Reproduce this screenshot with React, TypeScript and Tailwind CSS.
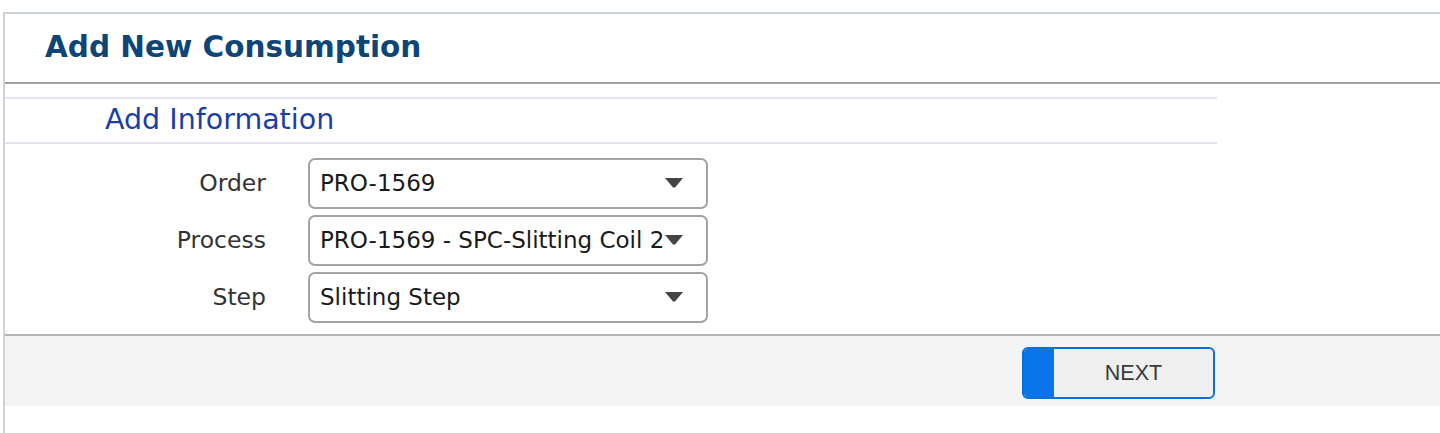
import React from 'react';

const rows = [
  { label: 'Order', value: 'PRO-1569' },
  { label: 'Process', value: 'PRO-1569 - SPC-Slitting Coil 2' },
  { label: 'Step', value: 'Slitting Step' },
];

function SelectBox({ value }: { value: string }) {
  return (
    <div className="relative flex items-center w-[400px] h-[51px] rounded-[7px] border-2 border-[#a3a3a3] bg-white pl-[10px] overflow-hidden">
      <span className="whitespace-nowrap text-[23px] text-[#1a1a1a]">{value}</span>
      {/* dropdown caret */}
      <svg className="absolute right-[23px] top-[18px]" width="18" height="10" viewBox="0 0 18 10">
        <path d="M0 0 H18 L10 9.5 H8 Z" fill="#444" />
      </svg>
    </div>
  );
}

function App() {
  return (
    <div className="w-[1440px] h-[433px] bg-white pt-[12px] pl-[3px]" style={{ fontFamily: '"DejaVu Sans", Verdana, sans-serif' }}>
      <div className="h-[421px] border-l-2 border-t-2 border-[#ccd4d4] flex flex-col">
        {/* Header */}
        <div className="h-[70px] flex items-center pl-[40px] pb-[2px] border-b-2 border-[#a2a2a2] shrink-0">
          <h1 className="text-[29.5px] font-bold text-[#0d4676]">Add New Consumption</h1>
        </div>

        <div className="h-[13px] shrink-0" />

        {/* Section title */}
        <div className="w-[1212px] h-[47px] border-y-2 border-[#e2e2f2] flex items-center pl-[100px] shrink-0">
          <h2 className="text-[28.5px] text-[#1b3ea6]">Add Information</h2>
        </div>

        {/* Form */}
        <div className="flex flex-col gap-[6px] pt-[14px] shrink-0">
          {rows.map((r) => (
            <div key={r.label} className="flex items-center">
              <div className="w-[261px] text-right text-[23.5px] text-[#333]">{r.label}</div>
              <div className="w-[42px]" />
              <SelectBox value={r.value} />
            </div>
          ))}
        </div>

        <div className="h-[11px] shrink-0" />

        {/* Footer */}
        <div className="h-[72px] bg-[#f4f4f4] border-t-2 border-[#b4b4b4] flex items-start pt-[11px] pl-[1017px] shrink-0">
          <button className="flex h-[52px] w-[193px] rounded-[6px] border-2 border-[#0b6fd9] overflow-hidden bg-[#efefef]">
            <span className="w-[30px] h-full bg-[#0a74ea]" />
            <span className="flex-1 h-full flex items-center justify-center text-[21.5px] text-[#3a3a3a]" style={{ fontFamily: '"Liberation Sans", Arial, sans-serif' }}>
              NEXT
            </span>
          </button>
        </div>
      </div>
    </div>
  );
}

export default App;
